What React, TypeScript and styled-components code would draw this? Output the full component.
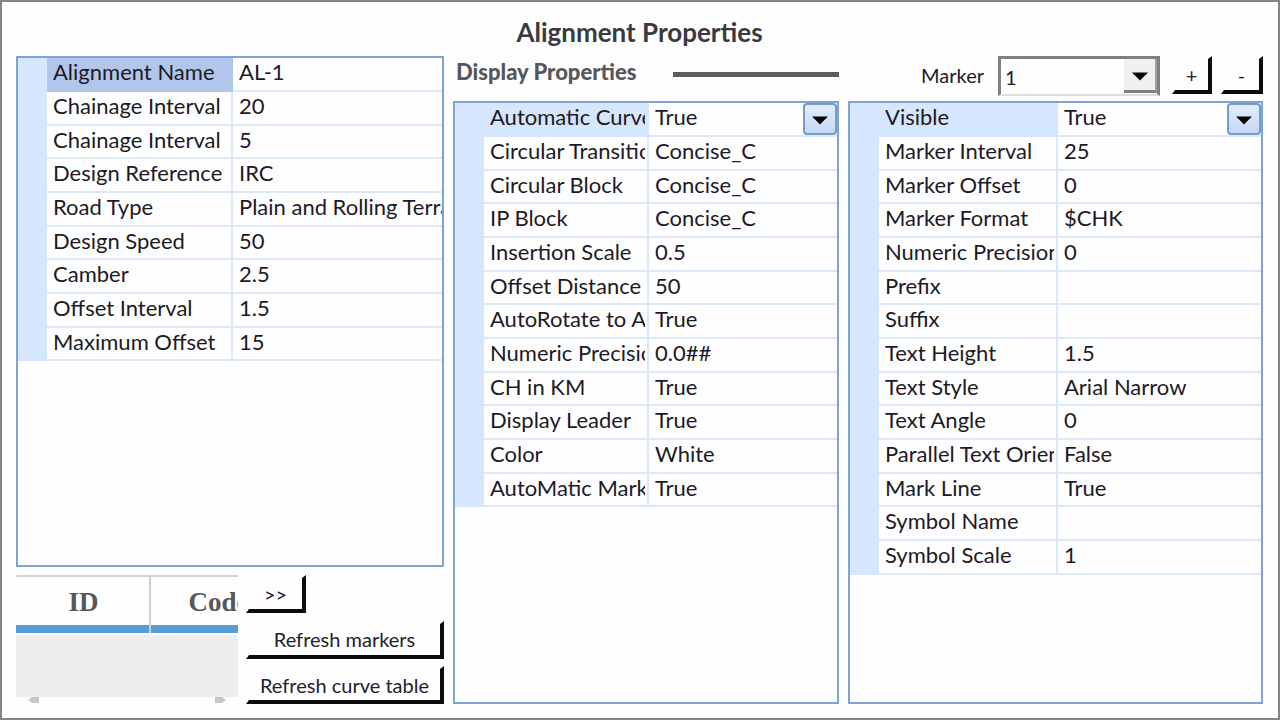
import React from "react";
import styled, { createGlobalStyle } from "styled-components";

const GlobalStyle = createGlobalStyle`
  *, *::before, *::after { box-sizing: border-box; }
  body {
    margin: 0;
    background: #fefefe;
    color: #1d1a26;
    font-family: Lato, "Noto Sans", sans-serif;
    font-size: 22px;
    line-height: 26px;
  }
`;

const Dialog = styled.main`
  display: flex;
  flex-direction: column;
  min-height: 100vh;
  padding: 14px 15px 14px 14px;
  border: 2px solid #858585;
`;

const Title = styled.h1`
  margin: 0 0 10px;
  padding-top: 2px;
  color: #3a3a3e;
  font-size: 26px;
  font-weight: 700;
  line-height: 28px;
  text-align: center;
`;

const Columns = styled.div`
  display: grid;
  flex: 1;
  grid-template-columns: minmax(0, 428fr) minmax(0, 386fr) minmax(0, 415fr);
  gap: 9px;
`;

const Column = styled.section`
  display: flex;
  flex-direction: column;
  min-width: 0;
`;

const Panel = styled.div`
  flex: 1;
  overflow: hidden;
  border: 2px solid #7fa3d6;
`;

const Grid = styled.table<{ $label: number }>`
  width: 100%;
  table-layout: fixed;
  border-collapse: separate;
  border-spacing: 0;

  col.gutter { width: 29px; }
  col.label { width: ${(p) => p.$label}px; }
`;

const Row = styled.tr`
  height: 34px;
  &:nth-child(3n) { height: 33px; }
`;

const Gutter = styled.td`
  padding: 0;
  background: #d5e6fd;
`;

const Label = styled.th<{ $fill?: string }>`
  padding: 0 2px 4px 6px;
  border-right: 2px solid #dbe8f7;
  border-bottom: 2px solid #dbe8f7;
  background: ${(p) => p.$fill ?? "transparent"};
  ${(p) => p.$fill && `border-color: ${p.$fill};`}
  font-weight: 400;
  text-align: left;
`;

const Clip = styled.span`
  display: block;
  overflow: hidden;
  white-space: nowrap;
`;

const Value = styled.td<{ $choice?: boolean }>`
  padding: ${(p) => (p.$choice ? "0" : "0 0 4px 6px")};
  border-bottom: 2px solid #dbe8f7;
`;

const Choice = styled.div`
  position: relative;
  height: 32px;
`;

const ChoiceSelect = styled.select`
  width: 100%;
  height: 100%;
  padding: 0 40px 4px 6px;
  border: 0;
  appearance: none;
  background: transparent;
  color: inherit;
  font: inherit;
`;

const ChoiceArrow = styled.span`
  position: absolute;
  top: 0;
  right: 0;
  display: grid;
  place-items: center;
  width: 34px;
  height: 32px;
  padding-top: 2px;
  border: 2px solid #7799cc;
  border-radius: 4px;
  background: linear-gradient(#e3edfa, #c3d8f4);
  pointer-events: none;
`;

const Arrow = () => (
  <svg width="16" height="9" viewBox="0 0 16 9" aria-hidden="true">
    <path d="M0 0.5H16L8 8.5Z" fill="#08080c" />
  </svg>
);

type Property = [string, string];

interface PropertyGridProps {
  name: string;
  rows: Property[];
  label: number;
  fill: string;
  choice?: boolean;
}

function PropertyGrid({ name, rows, label, fill, choice }: PropertyGridProps) {
  return (
    <Panel>
      <Grid $label={label} aria-label={name}>
        <colgroup>
          <col className="gutter" />
          <col className="label" />
          <col />
        </colgroup>
        <tbody>
          {rows.map(([key, value], i) => (
            <Row key={i}>
              <Gutter />
              <Label scope="row" $fill={i === 0 ? fill : undefined}>
                <Clip>{key}</Clip>
              </Label>
              {choice && i === 0 ? (
                <Value $choice>
                  <Choice>
                    <ChoiceSelect aria-label={key} defaultValue={value}>
                      <option>True</option>
                      <option>False</option>
                    </ChoiceSelect>
                    <ChoiceArrow><Arrow /></ChoiceArrow>
                  </Choice>
                </Value>
              ) : (
                <Value><Clip>{value}</Clip></Value>
              )}
            </Row>
          ))}
        </tbody>
      </Grid>
    </Panel>
  );
}

const SectionHead = styled.header`
  display: flex;
  align-items: flex-start;
  height: 45px;
`;

const SectionTitle = styled.h2`
  flex: 1;
  margin: 0;
  padding: 2px 0 0 3px;
  color: #57575a;
  font-size: 22px;
  font-weight: 900;
  line-height: 28px;
  white-space: nowrap;
`;

const Rule = styled.hr`
  width: 43%;
  height: 5px;
  margin: 16px 0 0;
  border: 0;
  background: #5e5e60;
`;

const MarkerBar = styled.header`
  display: flex;
  justify-content: flex-end;
  height: 45px;
`;

const MarkerLabel = styled.label`
  padding: 6px 14px 0 0;
  font-size: 20px;
`;

const MarkerBox = styled.div`
  position: relative;
  width: 162px;
  height: 40px;
  margin-right: 12px;
  border: 3px solid #808080;
  border-bottom: 2px solid #dedede;
`;

const MarkerSelect = styled.select`
  width: 100%;
  height: 100%;
  padding: 0 40px 0 4px;
  border: 0;
  appearance: none;
  background: transparent;
  color: inherit;
  font: inherit;
  font-size: 20px;
`;

const MarkerArrow = styled.span`
  position: absolute;
  top: 0;
  right: 0;
  display: grid;
  place-items: center;
  width: 33px;
  height: 34px;
  padding-top: 4px;
  border-right: 2px solid #a0a0a0;
  border-bottom: 3px solid #808080;
  background: #f0f0f0;
  pointer-events: none;
`;

const Button = styled.button<{ $width?: string }>`
  width: ${(p) => p.$width ?? "100%"};
  height: 38px;
  padding: 0;
  border: solid #0c0c0c;
  border-width: 3px 4px 4px 3px;
  border-top-color: transparent;
  border-left-color: transparent;
  background: transparent;
  color: #22222c;
  font: inherit;
  font-size: 20px;
  line-height: 24px;
`;

const StepButtons = styled.div`
  display: flex;
  gap: 9px;
`;

const Footer = styled.div`
  display: flex;
  gap: 8px;
  height: 129px;
  margin-top: 8px;
`;

const ListBox = styled.div`
  display: flex;
  flex: none;
  flex-direction: column;
  width: 222px;
  overflow: hidden;
`;

const ListTable = styled.table`
  width: 270px;
  table-layout: fixed;
  border-spacing: 0;
`;

const ListHead = styled.th`
  height: 58px;
  padding: 0 0 6px;
  border-top: 2px solid #d3d0d0;
  background:
    linear-gradient(#cfcfd2, #cfcfd2) right / 2px 100% no-repeat,
    linear-gradient(#559fd8, #559fd8) bottom / 100% 8px no-repeat;
  color: #57575b;
  font: 700 27px/32px "Liberation Serif", serif;
`;

const ListBody = styled.div`
  flex: 1;
  margin-top: 2px;
  background: #eeeeee;
`;

const ScrollBar = styled.div`
  display: flex;
  justify-content: space-between;
  padding: 0 12px 1px;
`;

const Actions = styled.div`
  display: flex;
  flex: 1;
  flex-direction: column;
  justify-content: space-between;
`;

const alignment: Property[] = [
  ["Alignment Name", "AL-1"],
  ["Chainage Interval", "20"],
  ["Chainage Interval", "5"],
  ["Design Reference", "IRC"],
  ["Road Type", "Plain and Rolling Terrain"],
  ["Design Speed", "50"],
  ["Camber", "2.5"],
  ["Offset Interval", "1.5"],
  ["Maximum Offset", "15"],
];

const display: Property[] = [
  ["Automatic Curve", "True"],
  ["Circular Transition", "Concise_C"],
  ["Circular Block", "Concise_C"],
  ["IP Block", "Concise_C"],
  ["Insertion Scale", "0.5"],
  ["Offset Distance", "50"],
  ["AutoRotate to Alignment", "True"],
  ["Numeric Precision", "0.0##"],
  ["CH in KM", "True"],
  ["Display Leader", "True"],
  ["Color", "White"],
  ["AutoMatic Marker", "True"],
];

const marker: Property[] = [
  ["Visible", "True"],
  ["Marker Interval", "25"],
  ["Marker Offset", "0"],
  ["Marker Format", "$CHK"],
  ["Numeric Precision", "0"],
  ["Prefix", ""],
  ["Suffix", ""],
  ["Text Height", "1.5"],
  ["Text Style", "Arial Narrow"],
  ["Text Angle", "0"],
  ["Parallel Text Orientation", "False"],
  ["Mark Line", "True"],
  ["Symbol Name", ""],
  ["Symbol Scale", "1"],
];

export default function App() {
  return (
    <>
      <GlobalStyle />
      <Dialog>
        <Title>Alignment Properties</Title>
        <Columns>
          <Column>
            <PropertyGrid name="Alignment" rows={alignment} label={186} fill="#b1c6ea" />
            <Footer>
              <ListBox>
                <ListTable>
                  <thead>
                    <tr>
                      <ListHead scope="col">ID</ListHead>
                      <ListHead scope="col">Code</ListHead>
                    </tr>
                  </thead>
                </ListTable>
                <ListBody />
                <ScrollBar>
                  <svg width="11" height="6" viewBox="0 0 11 6" aria-hidden="true">
                    <path d="M0 3L4 0H11V6H4Z" fill="#c6c6c6" />
                  </svg>
                  <svg width="11" height="6" viewBox="0 0 11 6" aria-hidden="true">
                    <path d="M11 3L7 0H0V6H7Z" fill="#c6c6c6" />
                  </svg>
                </ScrollBar>
              </ListBox>
              <Actions>
                <Button type="button" $width="60px">&gt;&gt;</Button>
                <Button type="button">Refresh markers</Button>
                <Button type="button">Refresh curve table</Button>
              </Actions>
            </Footer>
          </Column>
          <Column>
            <SectionHead>
              <SectionTitle>Display Properties</SectionTitle>
              <Rule />
            </SectionHead>
            <PropertyGrid name="Display Properties" rows={display} label={165} fill="#d5e6fd" choice />
          </Column>
          <Column>
            <MarkerBar>
              <MarkerLabel htmlFor="marker">Marker</MarkerLabel>
              <MarkerBox>
                <MarkerSelect id="marker" defaultValue="1">
                  <option>1</option>
                  <option>2</option>
                </MarkerSelect>
                <MarkerArrow><Arrow /></MarkerArrow>
              </MarkerBox>
              <StepButtons>
                <Button type="button" $width="40px">+</Button>
                <Button type="button" $width="42px">-</Button>
              </StepButtons>
            </MarkerBar>
            <PropertyGrid name="Marker" rows={marker} label={179} fill="#d5e6fd" choice />
          </Column>
        </Columns>
      </Dialog>
    </>
  );
}
